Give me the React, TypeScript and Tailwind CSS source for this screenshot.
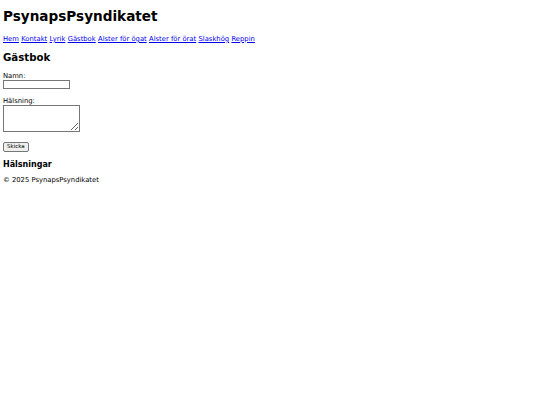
export default function App() {
  const links = [
    "Hem",
    "Kontakt",
    "Lyrik",
    "Gästbok",
    "Alster för ögat",
    "Alster för örat",
    "Slaskhög",
    "Reppin",
  ];
  return (
    <div className="min-h-[405px] bg-white px-[3px] py-[1px] font-['DejaVu_Sans',sans-serif] text-[6.8px] leading-[1.164] text-black">
      <h1 className="mt-[8px] mb-[11px] text-[13.6px] font-bold">PsynapsPsyndikatet</h1>
      <nav className="flex gap-[2.3px]">
        {links.map((l) => (
          <a key={l} href="#" className="text-[#0000ee] underline">
            {l}
          </a>
        ))}
      </nav>
      <main>
        <h2 className="mt-[8px] mb-[9px] text-[10.2px] font-bold">Gästbok</h2>
        <form className="flex flex-col items-start">
          <label className="leading-[7px]">Namn:</label>
          <input
            type="text"
            className="mb-[9px] h-[9px] w-[67px] border border-[#767676] bg-white"
          />
          <label className="leading-[7px]">Hälsning:</label>
          <textarea className="h-[27px] w-[77px] resize border border-[#767676] bg-white" />
          <button
            type="button"
            className="mt-[10px] h-[10px] rounded-[2px] border border-[#767676] bg-[#efefef] px-[3px] text-[5.5px] leading-none"
          >
            Skicka
          </button>
        </form>
        <h3 className="mt-[8px] mb-[8px] text-[8px] font-bold">Hälsningar</h3>
      </main>
      <footer>
        <p>© 2025 PsynapsPsyndikatet</p>
      </footer>
    </div>
  );
}
